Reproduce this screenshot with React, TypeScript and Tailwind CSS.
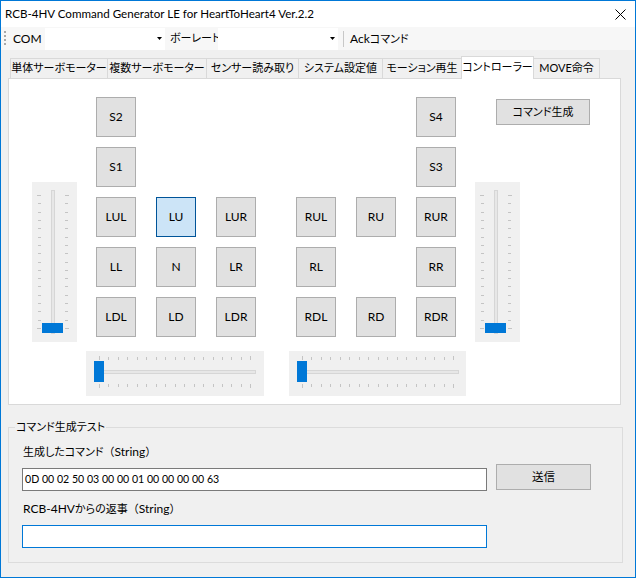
import React from "react";

const ff = "font-['Lato','Noto_Sans_CJK_JP',sans-serif] [font-feature-settings:'palt']";
const jp = "text-[11px]";
const np = "[font-feature-settings:normal] text-[11px]";

function Btn({ label, selected = false }: { label: string; selected?: boolean }) {
  if (!label) return <div className="w-[40px] h-[40px]" />;
  return (
    <div
      className={`w-[40px] h-[40px] flex items-center justify-center border text-[12px] text-black ${
        selected ? "bg-[#cce4f7] border-[#005499]" : "bg-[#e1e1e1] border-[#adadad]"
      }`}
    >
      {label}
    </div>
  );
}

function VSlider() {
  const ticks = Array.from({ length: 17 }, (_, i) => 13 + (133 / 16) * i);
  return (
    <div className="w-[45px] h-[160px] bg-[#f0f0f0]">
      <svg width="45" height="160" viewBox="0 0 45 160">
        {ticks.map((y, i) => {
          const long = i === 0 || i === 16;
          return (
            <g key={i}>
              <rect x={long ? 5 : 6} y={Math.round(y)} width={long ? 4 : 3} height={1} fill="#c4c4c4" />
              <rect x={33} y={Math.round(y)} width={long ? 4 : 3} height={1} fill="#c4c4c4" />
            </g>
          );
        })}
        <rect x={19.5} y={8.5} width={3} height={143} fill="#e7e7e7" stroke="#d6d6d6" strokeWidth={1} />
        <rect x={10} y={141} width={21} height={10} fill="#0078d7" />
      </svg>
    </div>
  );
}

function HSlider({ w }: { w: number }) {
  const ticks = Array.from({ length: 17 }, (_, i) => 13 + (151.4 / 16) * i);
  return (
    <div className="h-[45px] bg-[#f0f0f0]" style={{ width: w }}>
      <svg width={w} height="45" viewBox={`0 0 ${w} 45`}>
        {ticks.map((x, i) => {
          const long = i === 0 || i === 16;
          return (
            <g key={i}>
              <rect x={Math.round(x)} y={long ? 5 : 6} width={1} height={long ? 4 : 3} fill="#c4c4c4" />
              <rect x={Math.round(x)} y={33} width={1} height={long ? 4 : 3} fill="#c4c4c4" />
            </g>
          );
        })}
        <rect x={8.5} y={19.5} width={161} height={3} fill="#e7e7e7" stroke="#d6d6d6" strokeWidth={1} />
        <rect x={8} y={10} width={10} height={21} fill="#0078d7" />
      </svg>
    </div>
  );
}

function Combo({ w }: { w: number }) {
  return (
    <div className="h-[22px] bg-white flex items-center justify-end pr-[3px]" style={{ width: w }}>
      <svg width="5" height="3" viewBox="0 0 5 3">
        <polygon points="0,0 5,0 2.5,3" fill="#000" />
      </svg>
    </div>
  );
}

const leftGrid = [
  ["S2", "", ""],
  ["S1", "", ""],
  ["LUL", "LU", "LUR"],
  ["LL", "N", "LR"],
  ["LDL", "LD", "LDR"],
];
const rightGrid = [
  ["", "", "S4"],
  ["", "", "S3"],
  ["RUL", "RU", "RUR"],
  ["RL", "", "RR"],
  ["RDL", "RD", "RDR"],
];

const tabs = [
  { t: "単体サーボモーター", w: 98 },
  { t: "複数サーボモーター", w: 100 },
  { t: "センサー読み取り", w: 93 },
  { t: "システム設定値", w: 85 },
  { t: "モーション再生", w: 80 },
  { t: "コントローラー", w: 73, sel: true },
  { t: "MOVE命令", w: 67 },
];

export default function App() {
  return (
    <div className={`w-[636px] h-[578px] border border-[#0078d7] bg-[#f0f0f0] flex flex-col text-[12px] text-black whitespace-nowrap ${ff}`}>
      {/* Title bar */}
      <div className="h-[26px] bg-white flex items-center justify-between pl-[4px] pr-[9px]">
        <span className="leading-none text-[11.6px]">RCB-4HV Command Generator LE for HeartToHeart4 Ver.2.2</span>
        <svg width="11" height="11" viewBox="0 0 11 11">
          <path d="M0.5 0.5 L10.5 10.5 M10.5 0.5 L0.5 10.5" stroke="#000" strokeWidth="1" />
        </svg>
      </div>

      {/* Toolbar */}
      <div className="h-[23px] bg-[#f7f7f7] flex items-center">
        <svg width="3" height="17" viewBox="0 0 3 17" className="ml-[3px]">
          {[0, 4, 8, 12].map((y) => (
            <rect key={y} x={0} y={y + 1} width={2} height={2} fill="#a8a8a8" />
          ))}
        </svg>
        <span className="ml-[6px] w-[32px]">COM</span>
        <Combo w={120} />
        <span className={`ml-[5px] w-[48px] ${jp}`}>ボーレート</span>
        <Combo w={120} />
        <div className="ml-[5px] w-[1px] h-[16px] bg-[#c8c8c8]" />
        <span className="ml-[6px]">
          Ack<span className={jp}>コマンド</span>
        </span>
      </div>

      {/* Tab control */}
      <div className="flex flex-col pl-[7px] pr-[14px] pt-[6px]">
        <div className="flex items-end h-[22px] pl-[2px] text-[11px]">
          {tabs.map((tab, i) =>
            tab.sel ? (
              <div
                key={i}
                className="relative z-10 -ml-px h-[23px] -mb-px bg-white border border-b-0 border-[#d9d9d9] flex items-center justify-center pb-[2px]"
                style={{ width: tab.w }}
              >
                {tab.t}
              </div>
            ) : (
              <div
                key={i}
                className={`h-[20px] bg-[#f0f0f0] border border-b-0 border-[#d9d9d9] flex items-center justify-center ${i === 0 ? "" : "-ml-px"}`}
                style={{ width: tab.w }}
              >
                {tab.t}
              </div>
            )
          )}
        </div>
        <div className="h-[327px] bg-white border border-[#d9d9d9] flex items-start">
          {/* Left vertical slider */}
          <div className="ml-[23px] mt-[103px]">
            <VSlider />
          </div>
          {/* Left cluster */}
          <div className="ml-[9px] w-[178px] flex flex-col">
            <div className="pl-[10px] mt-[18px] grid grid-cols-[40px_40px_40px] gap-x-[20px] gap-y-[10px]">
              {leftGrid.flat().map((l, i) => (
                <Btn key={i} label={l} selected={l === "LU"} />
              ))}
            </div>
            <div className="mt-[14px]">
              <HSlider w={178} />
            </div>
          </div>
          {/* Right cluster */}
          <div className="ml-[25px] w-[177px] flex flex-col">
            <div className="pl-[7px] mt-[18px] grid grid-cols-[40px_40px_40px] gap-x-[20px] gap-y-[10px]">
              {rightGrid.flat().map((l, i) => (
                <Btn key={i} label={l} />
              ))}
            </div>
            <div className="mt-[14px]">
              <HSlider w={177} />
            </div>
          </div>
          {/* Right column */}
          <div className="ml-[9px] flex flex-col">
            <div className={`ml-[21px] mt-[20px] w-[94px] h-[26px] bg-[#e1e1e1] border border-[#adadad] flex items-center justify-center ${jp}`}>
              コマンド生成
            </div>
            <div className="mt-[57px]">
              <VSlider />
            </div>
          </div>
        </div>
      </div>

      {/* Group box */}
      <div className="relative mt-[22px] ml-[7px] w-[615px] h-[136px] border border-[#dcdcdc] pl-[13px] pt-[15px]">
        <span className={`absolute left-[6px] -top-[9px] px-[1px] bg-[#f0f0f0] leading-[16px] ${jp}`}>コマンド生成テスト</span>
        <div className="h-[18px] flex items-center pl-[1px]">
          <span className={jp}>生成したコマンド</span>
          <span className={np}>（</span>
          <span>String</span>
          <span className={np}>）</span>
        </div>
        <div className="mt-[3px] flex items-start">
          <div className="mt-[4px] w-[465px] h-[23px] bg-white border border-[#7a7a7a] flex items-center pl-[2px] text-[10.6px]">
            0D 00 02 50 03 00 00 01 00 00 00 00 63
          </div>
          <div className="ml-[9px] w-[95px] h-[26px] bg-[#e1e1e1] border border-[#adadad] flex items-center justify-center text-[11.5px]">
            送信
          </div>
        </div>
        <div className="mt-[9px] h-[18px] flex items-center pl-[1px]">
          <span>RCB-4HV</span>
          <span className={jp}>からの返事</span>
          <span className={np}>（</span>
          <span>String</span>
          <span className={np}>）</span>
        </div>
        <div className="mt-[7px] w-[465px] h-[23px] bg-white border border-[#0078d7]" />
      </div>
    </div>
  );
}
